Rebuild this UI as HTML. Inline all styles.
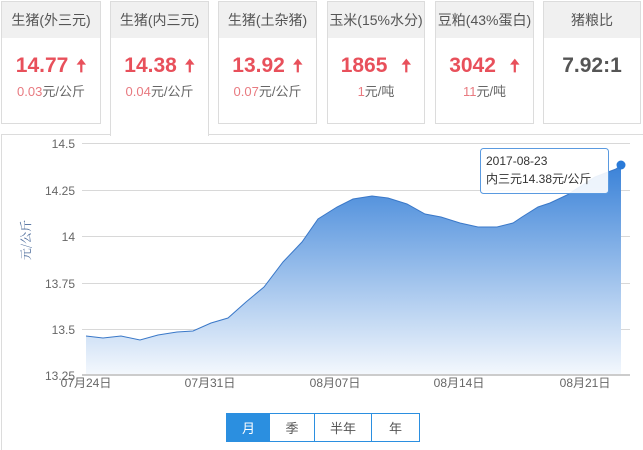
<!DOCTYPE html>
<html><head><meta charset="utf-8"><style>
html,body{margin:0;width:643px;height:450px;overflow:hidden}
body{background:#fff;position:relative;font-family:"Liberation Sans","Noto Sans CJK SC",sans-serif}
.c{position:absolute;top:1px;height:123px;border:1px solid #dcdcdc;box-sizing:border-box;background:#fff;text-align:center}
.c .h{height:36px;line-height:36px;background:#f0f0f0;color:#555;font-size:14px}
.c .v{margin-top:16px;font-size:21px;font-weight:bold;color:#e8505b;line-height:24px}
.c .v span{font-size:18px;margin-left:8px}
.c .s{margin-top:5px;font-size:13px;color:#666;line-height:18px}
.c .s b{font-weight:normal;color:#e87a80}
.act{height:135px;border-bottom:none;z-index:2}
.panel{position:absolute;left:1px;top:134px;width:650px;height:330px;border:1px solid #dcdcdc;box-sizing:border-box}
.btn{position:absolute;top:413px;height:29px;line-height:29px;text-align:center;font-size:13px;color:#555;border:1px solid #2b8fe0;box-sizing:border-box;background:#fff}
</style></head><body>
<div class="panel"></div>
<div class="c" style="left:1px;width:100px"><div class="h">生猪(外三元)</div><div class="v">14.77<span>🠅</span></div><div class="s"><b>0.03</b>元/公斤</div></div>
<div class="c act" style="left:110px;width:99px"><div class="h">生猪(内三元)</div><div class="v">14.38<span>🠅</span></div><div class="s"><b>0.04</b>元/公斤</div></div>
<div class="c" style="left:218px;width:99px"><div class="h">生猪(土杂猪)</div><div class="v">13.92<span>🠅</span></div><div class="s"><b>0.07</b>元/公斤</div></div>
<div class="c" style="left:327px;width:98px"><div class="h">玉米(15%水分)</div><div class="v">1865<span style="margin-left:14px">🠅</span></div><div class="s"><b>1</b>元/吨</div></div>
<div class="c" style="left:435px;width:99px"><div class="h">豆粕(43%蛋白)</div><div class="v">3042<span style="margin-left:14px">🠅</span></div><div class="s"><b>11</b>元/吨</div></div>
<div class="c" style="left:543px;width:98px"><div class="h">猪粮比</div><div class="v" style="color:#555">7.92:1</div></div>
<svg style="position:absolute;left:0;top:0" width="643" height="450">
<defs><linearGradient id="g" gradientUnits="userSpaceOnUse" x1="0" y1="165" x2="0" y2="375"><stop offset="0" stop-color="#3a82d8"/><stop offset="1" stop-color="#f4f8fd"/></linearGradient></defs>
<g stroke="#d8d8d8" stroke-width="1">
<line x1="82" y1="143.5" x2="630" y2="143.5"/><line x1="82" y1="190.5" x2="630" y2="190.5"/><line x1="82" y1="236.5" x2="630" y2="236.5"/><line x1="82" y1="283.5" x2="630" y2="283.5"/><line x1="82" y1="329.5" x2="630" y2="329.5"/></g>
<path d="M86 336L103 338L121 336L140 340L158 335L177 332L193 331L211 323L228 318L246 302L264 287L283 262L302 242L318 219L337 207L353 199L372 196L388 198L407 204L425 214L441 217L460 223L478 227L497 227L513 223L522 217L538 207L550 203L567 195L595 177L616 169L621 165L621 375L86 375Z" fill="url(#g)"/>
<line x1="82" y1="375" x2="630" y2="375" stroke="#ccc" stroke-width="2"/>
<path d="M86 336L103 338L121 336L140 340L158 335L177 332L193 331L211 323L228 318L246 302L264 287L283 262L302 242L318 219L337 207L353 199L372 196L388 198L407 204L425 214L441 217L460 223L478 227L497 227L513 223L522 217L538 207L550 203L567 195L595 177L616 169L621 165" fill="none" stroke="#3a78c8" stroke-width="1"/>
<circle cx="621" cy="165" r="4.5" fill="#2a7ad8"/>
<g font-size="12" fill="#666" text-anchor="end" font-family="Liberation Sans,sans-serif">
<text x="75" y="148">14.5</text><text x="75" y="195">14.25</text><text x="75" y="241">14</text><text x="75" y="288">13.75</text><text x="75" y="334">13.5</text><text x="75" y="380">13.25</text></g>
<g font-size="12" fill="#666" text-anchor="middle" font-family="Liberation Sans,Noto Sans CJK SC,sans-serif">
<text x="86" y="387">07月24日</text><text x="210" y="387">07月31日</text><text x="335" y="387">08月07日</text><text x="459" y="387">08月14日</text><text x="585" y="387">08月21日</text></g>
<text transform="translate(30,240) rotate(-90)" font-size="12" fill="#4a6a9a" text-anchor="middle" font-family="Noto Serif CJK SC,serif">元/公斤</text>
<rect x="480.5" y="148.5" width="128" height="45" rx="3" fill="#fff" fill-opacity="0.9" stroke="#5a9ae0"/>
<text x="486" y="165" font-size="12" fill="#333" font-family="Liberation Sans,Noto Sans CJK SC,sans-serif">2017-08-23</text>
<text x="486" y="183" font-size="12" fill="#333" font-family="Liberation Sans,Noto Sans CJK SC,sans-serif">内三元14.38元/公斤</text>
</svg>
<div class="btn" style="left:226px;width:45px;background:#2b8fe0;color:#fff">月</div>
<div class="btn" style="left:270px;width:45px;border-left:none">季</div>
<div class="btn" style="left:314px;width:58px;border-left:1px solid #2b8fe0">半年</div>
<div class="btn" style="left:371px;width:49px">年</div>
</body></html>
